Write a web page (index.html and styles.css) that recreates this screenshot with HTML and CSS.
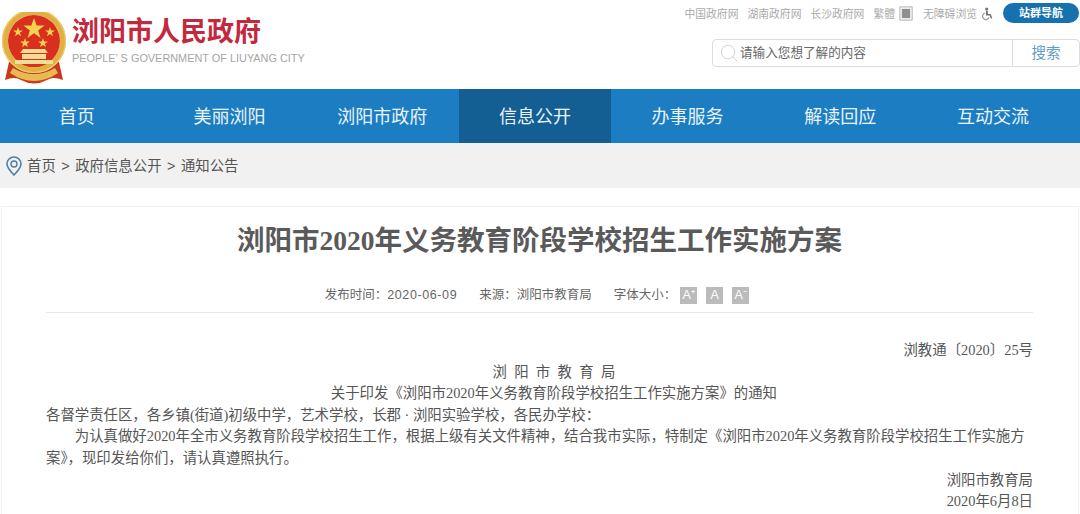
FILE: index.html
```html
<!DOCTYPE html>
<html lang="zh-CN">
<head>
  <meta charset="UTF-8">
  <meta name="viewport" content="width=device-width, initial-scale=1.0">
  <title>浏阳市人民政府</title>
  <link rel="stylesheet" href="styles.css">
</head>
<body>

  <header class="top">
    <div class="brand">
      <svg class="emblem" viewBox="0 0 66 72">
        <path d="M8 50 L4 68 Q14 64 20 68 Q33 75 46 68 Q52 64 62 68 L58 50Z" fill="#c9381f"/>
        <circle cx="33" cy="29" r="29" fill="none" stroke="#e0b040" stroke-width="6"/>
        <circle cx="33" cy="29" r="31.5" fill="none" stroke="#eccb78" stroke-width="1.2"/>
        <circle cx="33" cy="29" r="26" fill="#d92f1e"/>
        <path d="M33 6l2.600 7.600h8l-6.500 4.800 2.500 7.700-6.600-4.800-6.600 4.800 2.500-7.700-6.500-4.800h8z" fill="#f3d24f"/>
        <path d="M17 15l1.200 3.500h3.700l-3 2.200 1.200 3.500-3.100-2.200-3 2.200 1.100-3.500-3-2.200h3.700zM49 15l1.200 3.500h3.700l-3 2.200 1.100 3.500-3-2.200-3.100 2.200 1.200-3.500-3-2.200h3.700zM24 26l1.200 3.500h3.700l-3 2.200 1.100 3.500-3-2.200-3 2.200 1.100-3.500-3-2.200h3.700zM42 26l1.200 3.500h3.700l-3 2.200 1.100 3.500-3-2.200-3 2.200 1.100-3.500-3-2.200h3.700z" fill="#f3d24f"/>
        <path d="M22 37h22l3 4H19zM21 42h24v5H21zM14 48h38v4H14z" fill="#f3dc96"/>
        <path d="M12 56q10 6 21 6t21-6l3 5q-12 8-24 8T9 61z" fill="#e7bb52"/>
      </svg>
      <div class="brand-text">
        <div class="brand-name">浏阳市人民政府</div>
        <div class="brand-en">PEOPLE’ S GOVERNMENT OF LIUYANG CITY</div>
      </div>
    </div>
    <div class="top-right">
      <div class="links">
        <span>中国政府网</span>
        <span>湖南政府网</span>
        <span>长沙政府网</span>
        <span class="link-group">繁體
          <svg class="book" viewBox="0 0 16 16"><rect x="1" y="1" width="13" height="14" fill="#fff" stroke="#aaa"/><rect x="3" y="3" width="9" height="10" fill="#8f8f8f"/></svg>
        </span>
        <span class="link-group">无障碍浏览
          <svg class="wheel" viewBox="0 0 16 16"><circle cx="7" cy="2.500" r="2" fill="#777"/><path d="M6 5h2.500v3.500H12l2 5.500h-2l-1.500-3.500H6z" fill="#777"/><path d="M4.500 7.500a4.200 4.200 0 1 0 5.500 5.500" fill="none" stroke="#999" stroke-width="1.500"/></svg>
        </span>
        <span class="nav-btn">站群导航</span>
      </div>
      <div class="search">
        <div class="search-input">
          <svg class="search-icon" viewBox="0 0 20 20"><circle cx="9" cy="9" r="7.500" fill="none" stroke="#ccc"/><path d="M14 14l5 5" stroke="#ccc"/></svg>
          <span class="search-text">请输入您想了解的内容</span>
        </div>
        <div class="search-btn">搜索</div>
      </div>
    </div>
  </header>

  <nav class="nav">
    <a>首页</a>
    <a>美丽浏阳</a>
    <a>浏阳市政府</a>
    <a class="active">信息公开</a>
    <a>办事服务</a>
    <a>解读回应</a>
    <a>互动交流</a>
  </nav>

  <div class="crumbs">
    <svg class="pin" viewBox="0 0 16 20"><path d="M8 1a7 7 0 0 0-7 7c0 4 4 8 7 11 3-3 7-7 7-11a7 7 0 0 0-7-7z" fill="none" stroke="#4a7fa8" stroke-width="1.600"/><circle cx="8" cy="8" r="3" fill="none" stroke="#4a7fa8" stroke-width="1.400"/></svg>
    <span>首页 &gt; 政府信息公开 &gt; 通知公告</span>
  </div>

  <main class="article">
    <h1>浏阳市2020年义务教育阶段学校招生工作实施方案</h1>
    <div class="meta">
      <span>发布时间：<span class="date">2020-06-09</span></span>
      <span>来源：浏阳市教育局</span>
      <span class="sizes">字体大小：<i>A⁺</i><i>A</i><i>A⁻</i></span>
    </div>
    <div class="body">
      <p class="right">浏教通〔2020〕25号</p>
      <p class="center org">浏 阳 市 教 育 局</p>
      <p class="center">关于印发《浏阳市2020年义务教育阶段学校招生工作实施方案》的通知</p>
      <p>各督学责任区，各乡镇(街道)初级中学，艺术学校，长郡 · 浏阳实验学校，各民办学校：</p>
      <p class="indent">为认真做好2020年全市义务教育阶段学校招生工作，根据上级有关文件精神，结合我市实际，特制定《浏阳市2020年义务教育阶段学校招生工作实施方案》，现印发给你们，请认真遵照执行。</p>
      <p class="right">浏阳市教育局</p>
      <p class="right">2020年6月8日</p>
    </div>
  </main>

</body>
</html>
```
FILE: styles.css
```css
html, body {
  margin: 0;
  padding: 0;
  height: 514px;
  overflow: hidden;
}
body {
  display: flex;
  flex-direction: column;
  font-family: "Liberation Sans", "Noto Sans CJK SC", sans-serif;
  color: #444;
  background: #fff;
}
.top {
  height: 89px;
  flex: none;
  display: flex;
  justify-content: space-between;
}
.brand {
  display: flex;
  padding: 12px 0 0 1px;
}
.emblem {
  width: 66px;
  height: 72px;
}
.brand-text {
  margin-left: 5px;
}
.brand-name {
  font-size: 27px;
  line-height: 30px;
  margin-top: 5px;
  font-weight: bold;
  color: #c4283c;
}
.brand-en {
  font-size: 10.9px;
  color: #a5a5a5;
  margin-top: 5px;
  white-space: nowrap;
}
.top-right {
  width: 396px;
  padding-right: 1px;
}
.links {
  display: flex;
  align-items: center;
  justify-content: flex-end;
  font-size: 10.8px;
  color: #aaa;
  height: 20px;
  margin-top: 3px;
  gap: 9px;
}
.link-group {
  display: flex;
  align-items: center;
  gap: 4px;
}
.book {
  width: 15px;
  height: 15px;
}
.wheel {
  width: 13px;
  height: 15px;
}
.nav-btn {
  background: #1672ae;
  color: #fff;
  font-weight: bold;
  font-size: 11px;
  width: 76px;
  height: 20px;
  line-height: 20px;
  border-radius: 10px;
  text-align: center;
}
.search {
  display: flex;
  width: 366px;
  height: 26px;
  margin: 16px 0 0 29px;
  border: 1px solid #ddd;
  border-radius: 4px;
  font-size: 12.6px;
}
.search-input {
  flex: 1;
  display: flex;
  align-items: center;
  gap: 2px;
  padding-left: 7px;
  color: #666;
}
.search-text {
  line-height: 26px;
  height: 26px;
}
.search-icon {
  width: 18px;
  height: 18px;
}
.search-btn {
  width: 66px;
  border-left: 1px solid #ddd;
  text-align: center;
  line-height: 27px;
  font-size: 14.5px;
  color: #5f9bc4;
}
.nav {
  height: 54px;
  flex: none;
  display: grid;
  grid-template-columns: repeat(7, 152.700px);
  padding-left: 0.500px;
  background: #1d7dc2;
}
.nav a {
  color: #e8f4fb;
  font-size: 18px;
  line-height: 56px;
  text-align: center;
}
.nav .active {
  background: #135f94;
}
.crumbs {
  height: 45px;
  flex: none;
  background: #f1f1f1;
  display: flex;
  align-items: center;
  gap: 5px;
  padding-left: 6px;
  font-size: 14.400px;
  line-height: 46px;
  word-spacing: 1.500px;
  color: #555;
}
.pin {
  width: 16px;
  height: 20px;
}
.article {
  flex: 1;
  overflow: hidden;
  box-sizing: border-box;
  width: 1078px;
  margin: 18px 0 0 1px;
  padding-left: 44px;
  border: 1px solid #f0f0f0;
  border-bottom: none;
}
h1 {
  width: 987px;
  margin: 0;
  padding-top: 15px;
  font-family: "Liberation Serif", "Noto Sans CJK SC", serif;
  font-size: 27.500px;
  line-height: 38px;
  font-weight: bold;
  color: #5a5a5a;
  text-align: center;
}
.meta {
  width: 982px;
  padding-right: 5px;
  margin-top: 25px;
  height: 27px;
  display: flex;
  justify-content: center;
  gap: 22px;
  font-size: 12.500px;
  line-height: 20px;
  color: #666;
  border-bottom: 1px solid #e8e8e8;
}
.date {
  letter-spacing: 0.600px;
}
.sizes i {
  display: inline-block;
  width: 17px;
  height: 17px;
  line-height: 17px;
  margin-left: 9px;
  font-style: normal;
  text-align: center;
  color: #fff;
  background: #bbb;
}
.sizes i:first-child {
  margin-left: 4px;
}
.body {
  width: 987px;
  font-family: "Liberation Serif", "Noto Sans CJK SC", serif;
  font-size: 14.400px;
  line-height: 21.600px;
  color: #555;
  padding-top: 27px;
}
.body p {
  margin: 0;
}
.right {
  text-align: right;
}
.center {
  text-align: center;
  text-indent: 2em;
}
.org {
  word-spacing: 3.700px;
}
.indent {
  text-indent: 2em;
}
```
